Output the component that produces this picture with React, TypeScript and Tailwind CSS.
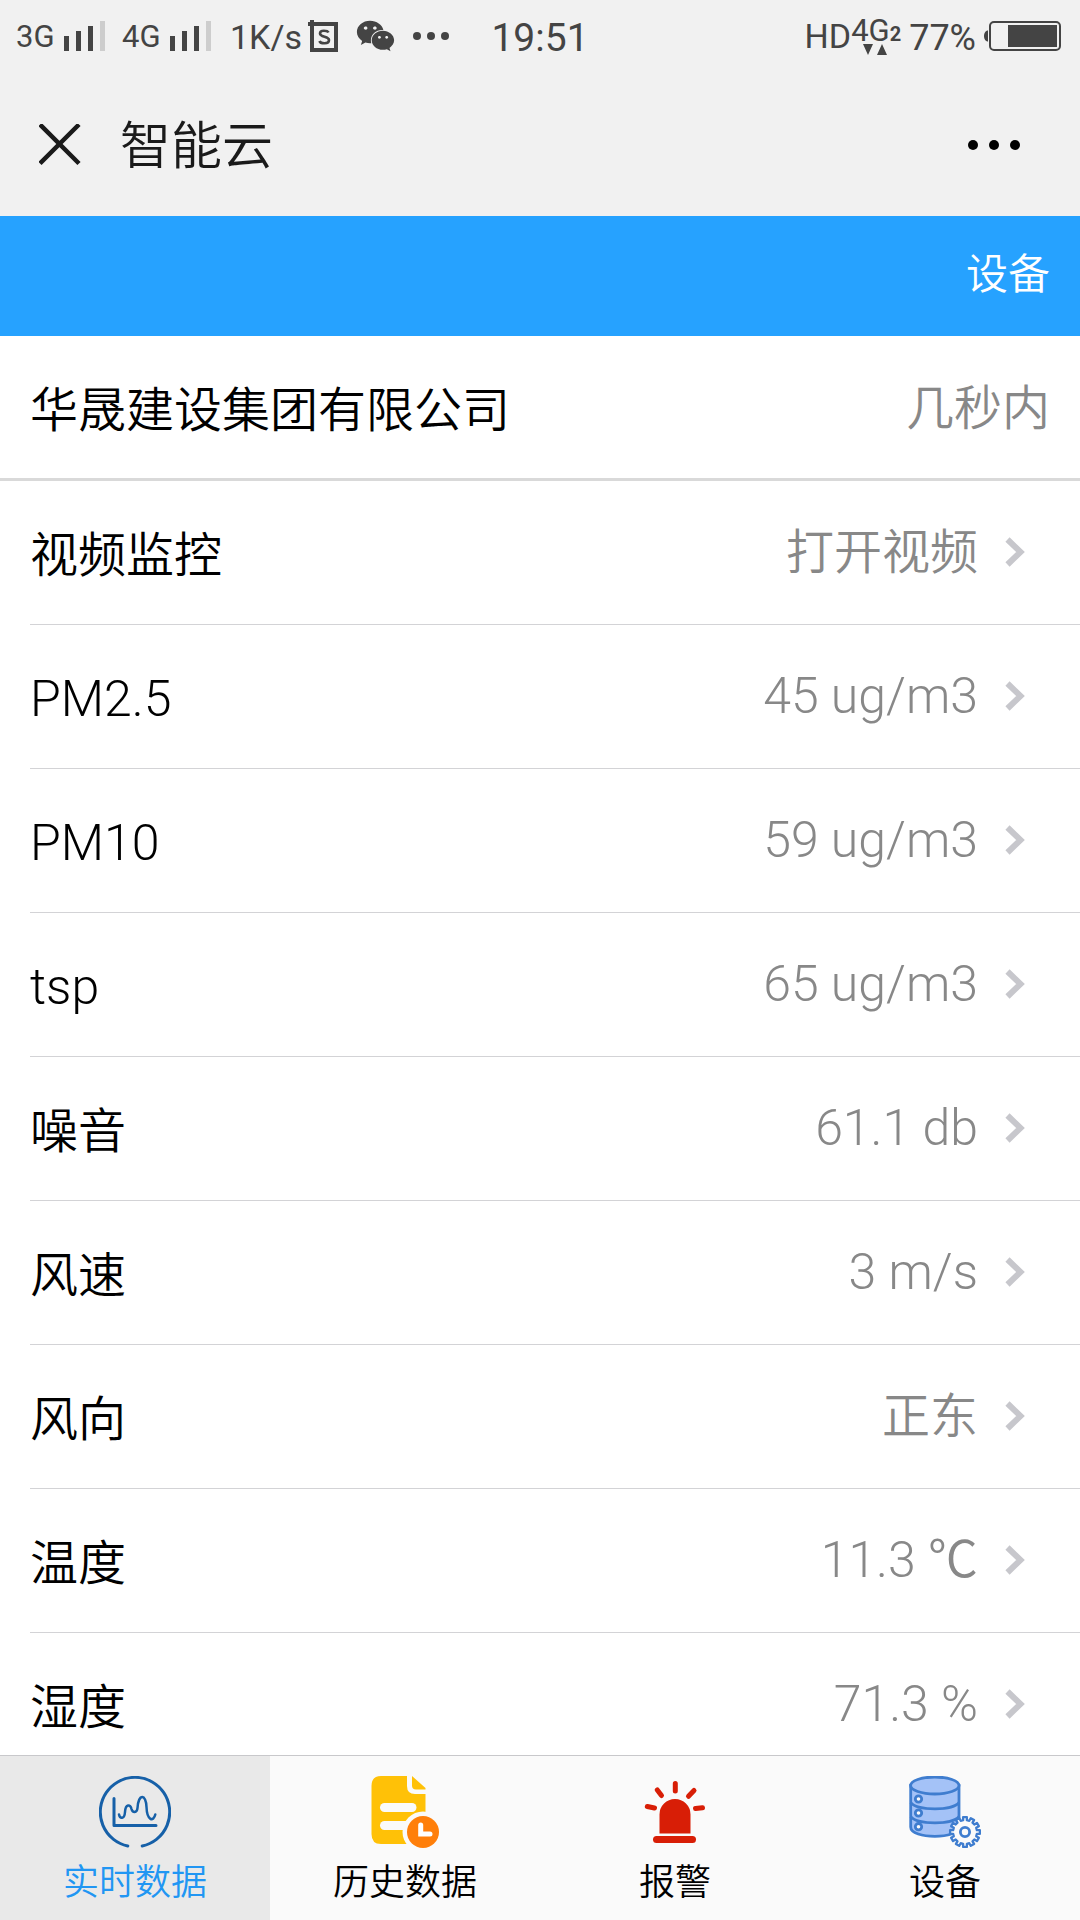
import React from 'react';
import { FaWeixin } from 'react-icons/fa';

type Reading = {
  label: string;
  value: string;
  unit?: string;
};

const readings: Reading[] = [
  { label: '视频监控', value: '打开视频' },
  { label: 'PM2.5', value: '45', unit: 'ug/m3' },
  { label: 'PM10', value: '59', unit: 'ug/m3' },
  { label: 'tsp', value: '65', unit: 'ug/m3' },
  { label: '噪音', value: '61.1', unit: 'db' },
  { label: '风速', value: '3', unit: 'm/s' },
  { label: '风向', value: '正东' },
  { label: '温度', value: '11.3', unit: '℃' },
  { label: '湿度', value: '71.3', unit: '%' },
];

// Latin text and figures are set slightly larger than the Chinese text
const latin = "font-['Roboto','Noto_Sans_CJK_SC',sans-serif] text-[50px] font-[350]";

const SignalBars: React.FC = () => (
  <svg width="42" height="32" viewBox="0 0 42 32" fill="#444" aria-hidden="true">
    <rect x="0" y="16" width="5" height="15" />
    <rect x="12" y="11" width="5" height="20" />
    <rect x="24" y="6" width="5" height="25" />
    <rect x="36" y="1" width="5" height="30" fill="#cdcdcd" />
  </svg>
);

const Dots: React.FC<{ radius: number; gap: number }> = ({ radius, gap }) => (
  <svg width={gap * 2 + radius * 2} height={radius * 2} fill="currentColor" aria-hidden="true">
    {[0, 1, 2].map((i) => (
      <circle key={i} cx={radius + i * gap} cy={radius} r={radius} />
    ))}
  </svg>
);

const BatteryIcon: React.FC = () => (
  <svg width="78" height="30" viewBox="0 0 78 30" aria-hidden="true">
    <path d="M4 9.500v11C1.500 20.500 0 18 0 15s1.500-5.500 4-5.500z" fill="#444" />
    <rect x="6" y="1" width="70" height="28" rx="4" fill="none" stroke="#444" strokeWidth="2" />
    <rect x="24" y="4" width="49" height="22" fill="#444" />
  </svg>
);

const StatusBar: React.FC = () => (
  <div className="flex h-[72px] items-center px-4 font-['Roboto','Noto_Sans_CJK_SC',sans-serif] text-[#444]">
    <div className="flex flex-1 items-center">
      <span className="w-12 text-[31px]">3G</span>
      <SignalBars />
      <span className="ml-4 w-12 text-[31px]">4G</span>
      <SignalBars />
      <span className="ml-[18px] w-[78px] pt-0.5 text-[34px]">1K/s</span>
      <svg width="32" height="32" viewBox="0 0 32 32" aria-hidden="true">
        <path d="M4 4h24v26H4z" fill="none" stroke="#444" strokeWidth="4" />
        <path d="M0 2h2V0h4v6H0z" fill="#444" />
        <path
          d="M20.500 12.500C19.500 10.500 12 9.500 12 13.500c0 4 9 2.500 9 6.500 0 4.500-8.500 4-9.500 1"
          fill="none"
          stroke="#444"
          strokeWidth="2.600"
        />
      </svg>
      <FaWeixin className="ml-4 h-9 w-[39px]" />
      <span className="ml-[18px]">
        <Dots radius={4} gap={14} />
      </span>
    </div>
    <time className="pt-1 text-[39px]">19:51</time>
    <div className="flex flex-1 items-center justify-end">
      <span className="text-[34px]">HD</span>
      <span className="mr-1 flex flex-col items-center">
        <span className="flex items-baseline text-[31px] leading-[26px]">
          4G<span className="text-[20px] font-bold leading-none">2</span>
        </span>
        <svg width="26" height="11" viewBox="0 0 26 11" fill="#444" aria-hidden="true">
          <path d="M0 0h10L5 11zM14 11h10L19 0z" />
        </svg>
      </span>
      <span className="ml-1 mr-2 pt-1 text-[36px]">77%</span>
      <span className="mr-0.5">
        <BatteryIcon />
      </span>
    </div>
  </div>
);

const TitleBar: React.FC = () => (
  <header className="flex h-36 items-center pl-[39px] pr-[60px] pt-0.5 text-[#1a1a1a]">
    <button type="button" aria-label="关闭">
      <svg width="43" height="43" viewBox="0 0 43 43" aria-hidden="true">
        <path d="M1 0.500l39 39M40 0.500L1 39.500" stroke="currentColor" strokeWidth="4.500" />
      </svg>
    </button>
    <h1 className="ml-[38px] flex-1 text-[51px] font-[350]">智能云</h1>
    <button type="button" aria-label="更多" className="text-black">
      <Dots radius={5} gap={21} />
    </button>
  </header>
);

const Chevron: React.FC = () => (
  <svg width="20" height="30" viewBox="0 0 20 30" fill="none" aria-hidden="true">
    <path d="M2.500 2.500L15.500 15L2.500 27.500" stroke="#c7c7cc" strokeWidth="6" />
  </svg>
);

const ReadingRow: React.FC<Reading> = ({ label, value, unit }) => (
  <li className="ml-[30px] border-b border-[#d3d3d6]">
    <button type="button" className="flex h-[143px] w-full items-center pb-0.5 pr-[55px] text-left">
      <span className={`flex-1 pt-1.5 text-black ${/^\w/.test(label) ? latin : ''}`}>{label}</span>
      <span className={`mr-[27px] text-[#888] ${unit ? latin : ''}`}>
        {unit ? `${value} ${unit}` : value}
      </span>
      <Chevron />
    </button>
  </li>
);

const LiveIcon: React.FC = () => (
  <svg
    width="72"
    height="72"
    viewBox="0 0 72 72"
    fill="none"
    stroke="#1660a8"
    strokeWidth="3"
    strokeLinecap="round"
    strokeLinejoin="round"
    aria-hidden="true"
  >
    <path d="M28.800 70A34.700 34.700 0 1 1 43.200 70" />
    <path d="M15 22.500V49.500H57" />
    <path
      d="M20 38.500C21 43 25.500 43.500 26 36C26.500 27.500 31.500 28 32.500 33C33.500 37 38 37.500 38.500 32C39.500 17.500 47 17.500 47.500 31C48 45 54.500 46 56.300 38.500"
      strokeWidth="2.500"
    />
  </svg>
);

const HistoryIcon: React.FC = () => (
  <svg width="72" height="72" viewBox="0 0 72 72" aria-hidden="true">
    <path d="M12 0H38V10Q38 18 46 18H56.500V58Q56.500 68 46 68H12Q2.500 68 2.500 58V10Q2.500 0 12 0z" fill="#ffc107" />
    <path d="M43 0L56.500 12V13.500H47Q43 13.500 43 9.500z" fill="#ffc107" />
    <rect x="11" y="27" width="36.500" height="9" rx="4.500" fill="#fafafa" />
    <rect x="11" y="45" width="36.500" height="9" rx="4.500" fill="#fafafa" />
    <circle cx="54" cy="56" r="20.500" fill="#fafafa" />
    <circle cx="54" cy="56" r="16" fill="#ff7f0a" />
    <path d="M51.700 49V58H61" fill="none" stroke="#fff" strokeWidth="5" strokeLinecap="round" />
  </svg>
);

const AlarmIcon: React.FC = () => (
  <svg width="72" height="72" viewBox="0 0 72 72" fill="#d81e06" aria-hidden="true">
    <path d="M20.500 57.500V38.500a15.500 15.500 0 0 1 31 0V57.500z" />
    <rect x="14" y="60" width="43" height="7" rx="3.500" />
    <path
      d="M36.300 7.500V15M55 14.500L49.500 20.300M63.500 31.700L56.500 32.500M18.300 14L22.500 19.500M8.300 30.500L15.500 32"
      stroke="#d81e06"
      strokeWidth="5"
      strokeLinecap="round"
    />
  </svg>
);

// Outline of a cog centred on (56, 56): four points per tooth
const TEETH = 12;
const gearPoints = Array.from({ length: TEETH * 4 }, (_, i) => {
  const offsets = [-0.3, -0.24, 0.24, 0.3];
  const angle = ((Math.floor(i / 4) + offsets[i % 4]) / TEETH) * Math.PI * 2 - Math.PI / 2;
  const r = i % 4 === 1 || i % 4 === 2 ? 15 : 12;
  return `${(56 + r * Math.cos(angle)).toFixed(2)},${(56 + r * Math.sin(angle)).toFixed(2)}`;
}).join(' ');

const DeviceIcon: React.FC = () => (
  <svg width="72" height="72" viewBox="0 0 72 72" stroke="#3f7dcf" strokeWidth="2.800" aria-hidden="true">
    <path d="M1.700 9.500V51C1.700 63.500 50 63.500 50 51V9.500z" fill="#a4c2f7" />
    <ellipse cx="25.800" cy="9.500" rx="24.200" ry="8.500" fill="#a4c2f7" />
    <path d="M1.700 26.500C8 35 44 35 50 26.500M1.700 40.500C8 49 44 49 50 40.500" fill="none" />
    <circle cx="9.500" cy="23" r="3.200" fill="#fafafa" />
    <circle cx="9.500" cy="37" r="3.200" fill="#fafafa" />
    <circle cx="9.500" cy="50.700" r="3.200" fill="#fafafa" />
    <polygon points={gearPoints} fill="#fafafa" strokeWidth="2.300" strokeLinejoin="round" />
    <circle cx="56" cy="56" r="4.600" fill="#fafafa" />
  </svg>
);

const tabs = [
  { label: '实时数据', icon: <LiveIcon />, active: true },
  { label: '历史数据', icon: <HistoryIcon />, active: false },
  { label: '报警', icon: <AlarmIcon />, active: false },
  { label: '设备', icon: <DeviceIcon />, active: false },
];

const TabBar: React.FC = () => (
  <nav className="grid shrink-0 grid-cols-4 border-t border-[#c8c8cb] bg-[#fafafa]">
    {tabs.map((tab) => (
      <a
        key={tab.label}
        href="#"
        aria-current={tab.active ? 'page' : undefined}
        className={`flex flex-col items-center pb-2.5 pt-5 text-[36px] font-[350] ${
          tab.active ? 'bg-[#e9e9e9] text-[#2196f3]' : 'text-black'
        }`}
      >
        {tab.icon}
        <span className="mt-1.5 leading-[56px]">{tab.label}</span>
      </a>
    ))}
  </nav>
);

const App: React.FC = () => {
  return (
    <div className="flex h-screen flex-col bg-white font-['Inter','Noto_Sans_CJK_SC',sans-serif] leading-none">
      <div className="shrink-0 bg-[#f1f1f1]">
        <StatusBar />
        <TitleBar />
      </div>

      <div className="flex h-[120px] shrink-0 items-center justify-end bg-[#26a2ff] pb-1 pr-[30px]">
        <button type="button" className="text-[42px] font-[350] text-white">
          设备
        </button>
      </div>

      <main className="min-h-0 flex-1 overflow-y-auto text-[48px] font-[350] [scrollbar-width:none]">
        <div className="flex h-[145px] items-center border-b-3 border-[#d9d9d9] px-[30px] pt-0.5">
          <h2 className="flex-1 pt-1 text-black">华晟建设集团有限公司</h2>
          <span className="text-[#888]">几秒内</span>
        </div>
        <ul>
          {readings.map((reading) => (
            <ReadingRow key={reading.label} {...reading} />
          ))}
        </ul>
      </main>

      <TabBar />
    </div>
  );
};

export default App;
